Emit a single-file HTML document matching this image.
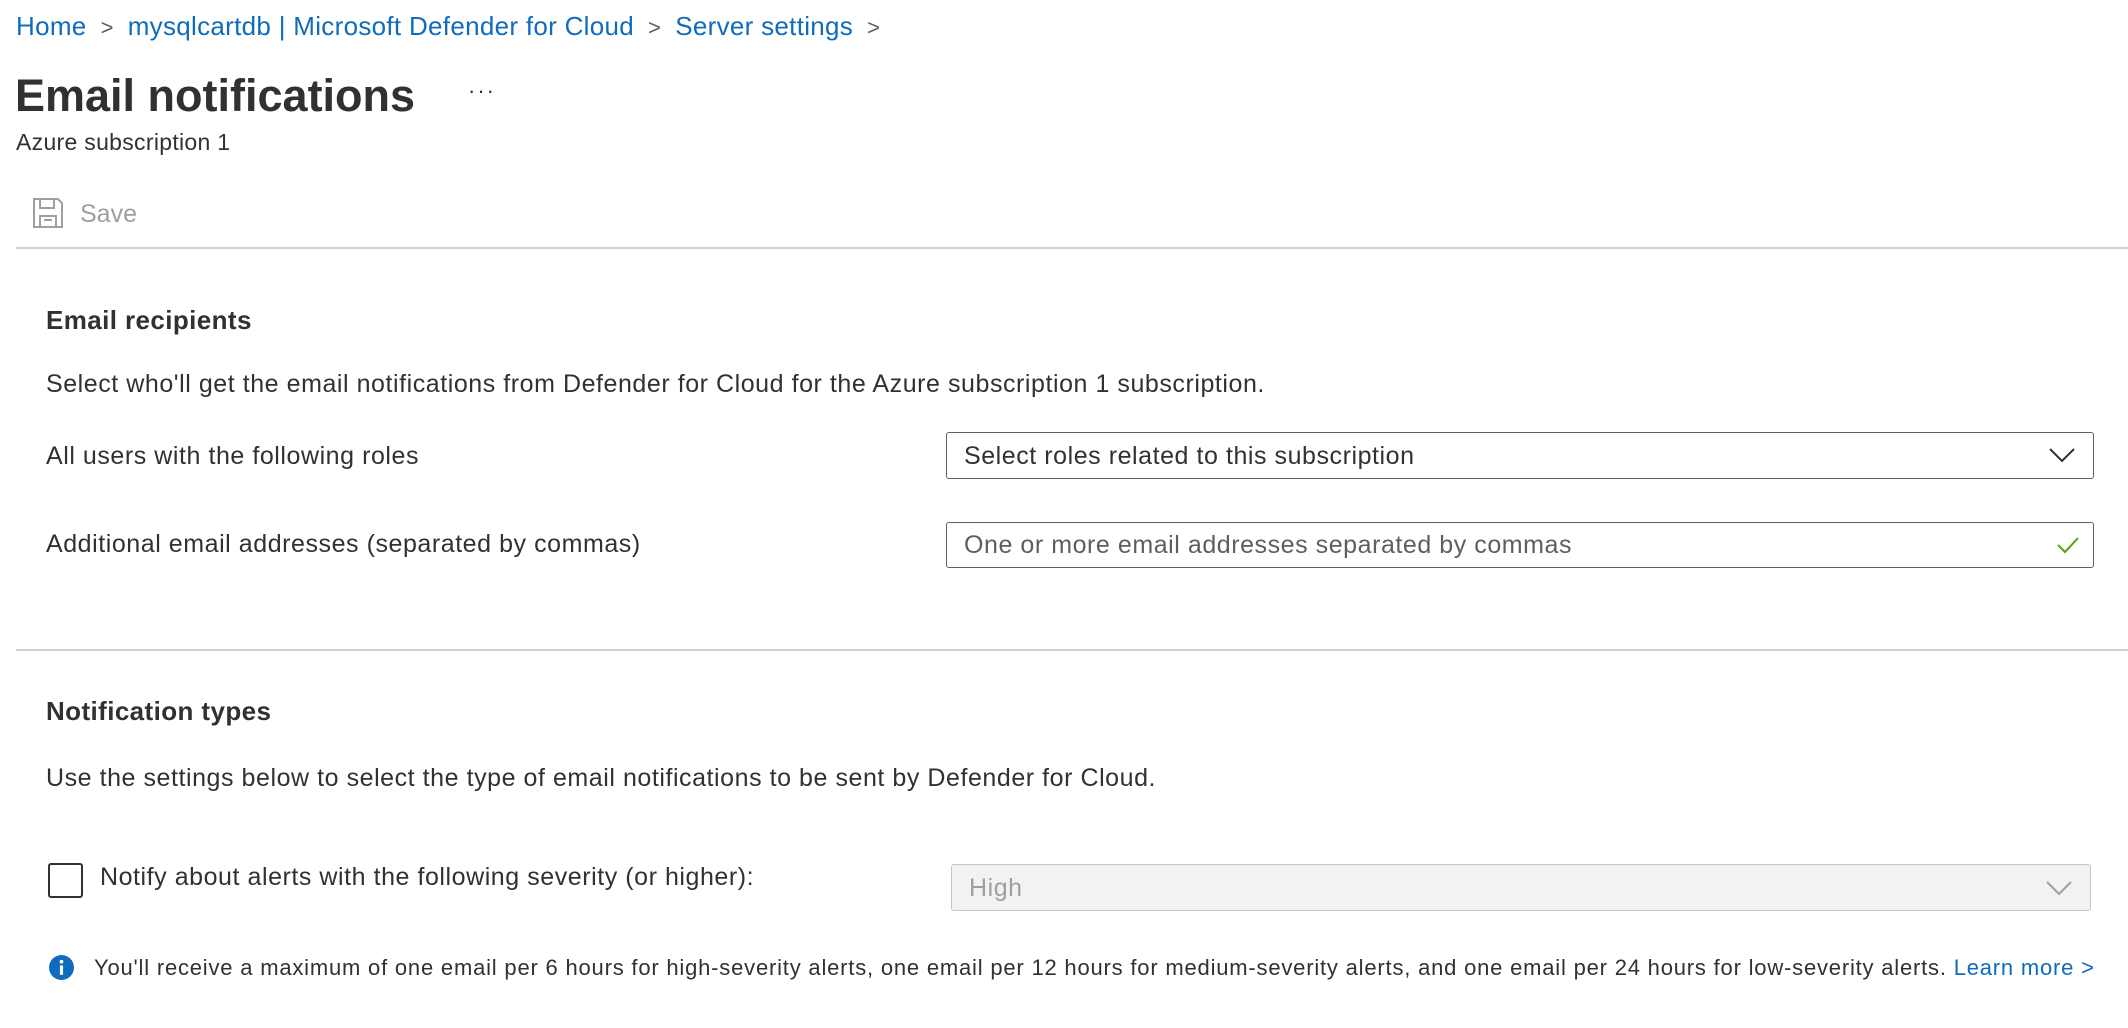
<!DOCTYPE html>
<html><head><meta charset="utf-8"><style>
*{margin:0;padding:0;box-sizing:border-box}
body{width:2128px;height:1028px;background:#fff;font-family:"Liberation Sans",sans-serif;color:#323130;position:relative;overflow:hidden}
.a{position:absolute;white-space:nowrap}
.bc{top:11px;left:16px;font-size:26px;color:#0f6cbd;letter-spacing:0.3px}
.bc span.s{color:#605e5c;margin:0 14px;font-size:22px}
.box{position:absolute;border:1.5px solid #605e5c;border-radius:3px;background:#fff}
.t{font-size:25px;line-height:1;letter-spacing:0.55px}
</style></head><body>
<div class="a bc">Home<span class="s">&gt;</span>mysqlcartdb | Microsoft Defender for Cloud<span class="s">&gt;</span>Server settings<span class="s">&gt;</span></div>
<div class="a" style="top:70px;left:15px;font-size:45px;font-weight:bold;color:#323130">Email notifications</div>
<div class="a" style="top:78px;left:468px;font-size:22px;letter-spacing:2px">···</div>
<div class="a" style="top:129px;left:16px;font-size:23px;letter-spacing:0.3px;color:#323130">Azure subscription 1</div>
<svg class="a" style="top:197px;left:32px" width="32" height="32" viewBox="0 0 32 32" fill="none" stroke="#a19f9d" stroke-width="2"><path d="M2 2h24l4 4v24H2z"/><path d="M8 2v9h14V2"/><path d="M8 30V19h16v11"/><path d="M12 23h8"/></svg>
<div class="a" style="top:200px;left:80px;color:#a19f9d;font-size:25px">Save</div>
<div class="a" style="top:247px;left:16px;width:2112px;height:2px;background:#d2d0ce"></div>
<div class="a" style="top:305px;left:46px;font-size:26px;font-weight:bold;letter-spacing:0.4px">Email recipients</div>
<div class="a t" style="top:372px;left:46px">Select who'll get the email notifications from Defender for Cloud for the Azure subscription 1 subscription.</div>
<div class="a t" style="top:444px;left:46px">All users with the following roles</div>
<div class="box" style="top:432px;left:946px;width:1148px;height:47px"></div>
<div class="a t" style="top:444px;left:964px">Select roles related to this subscription</div>
<svg class="a" style="top:446px;left:2048px" width="28" height="18" viewBox="0 0 28 18" fill="none" stroke="#323130" stroke-width="2"><path d="M2 3l12 12L26 3"/></svg>
<div class="a t" style="top:532px;left:46px">Additional email addresses (separated by commas)</div>
<div class="box" style="top:522px;left:946px;width:1148px;height:46px"></div>
<div class="a t" style="top:533px;left:964px;color:#605e5c">One or more email addresses separated by commas</div>
<svg class="a" style="top:535px;left:2056px" width="24" height="20" viewBox="0 0 24 20" fill="none" stroke="#57a300" stroke-width="2"><path d="M2 10l7 7L22 3"/></svg>
<div class="a" style="top:649px;left:16px;width:2112px;height:2px;background:#d2d0ce"></div>
<div class="a" style="top:696px;left:46px;font-size:26px;font-weight:bold;letter-spacing:0.4px">Notification types</div>
<div class="a t" style="top:766px;left:46px">Use the settings below to select the type of email notifications to be sent by Defender for Cloud.</div>
<div class="a" style="top:863px;left:48px;width:35px;height:35px;border:2px solid #323130;border-radius:3px"></div>
<div class="a t" style="top:865px;left:100px">Notify about alerts with the following severity (or higher):</div>
<div class="box" style="top:864px;left:951px;width:1140px;height:47px;background:#f3f2f1;border-color:#c8c6c4"></div>
<div class="a t" style="top:876px;left:969px;color:#a19f9d">High</div>
<svg class="a" style="top:879px;left:2045px" width="28" height="18" viewBox="0 0 28 18" fill="none" stroke="#a19f9d" stroke-width="2"><path d="M2 3l12 12L26 3"/></svg>
<svg class="a" style="top:955px;left:49px" width="25" height="25" viewBox="0 0 24 24"><circle cx="12" cy="12" r="12" fill="#0f6cbd"/><rect x="10.5" y="10" width="3" height="9" fill="#fff"/><circle cx="12" cy="6.5" r="1.8" fill="#fff"/></svg>
<div class="a" style="top:955px;left:94px;font-size:22px;letter-spacing:0.8px;color:#323130">You'll receive a maximum of one email per 6 hours for high-severity alerts, one email per 12 hours for medium-severity alerts, and one email per 24 hours for low-severity alerts. <span style="color:#0f6cbd">Learn more &gt;</span></div>
</body></html>
